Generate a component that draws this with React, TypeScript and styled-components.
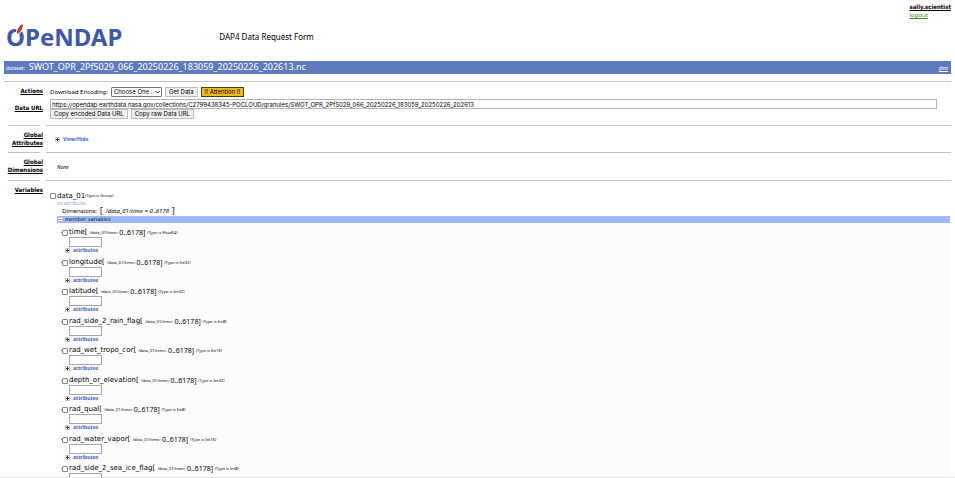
import React from "react";
import styled, { createGlobalStyle } from "styled-components";

const text = `"Noto Sans", Tahoma, sans-serif`;
const wide = `"DejaVu Sans", Verdana, sans-serif`;
const strong = `"DejaVu Sans Condensed", "DejaVu Sans", sans-serif`;
const control = `Inter, "Liberation Sans", sans-serif`;

const GlobalStyle = createGlobalStyle`
  *, *::before, *::after { box-sizing: border-box; }
  body {
    margin: 0;
    background: #fff;
    color: #000;
    font: 6px/8px ${text};
  }
`;

const Page = styled.main`
  height: 100vh;
  overflow: hidden;
  border-bottom: 1px solid #e6e6e6;
  padding: 3px 4px 0;
`;

const UserBox = styled.div`
  display: flex;
  flex-direction: column;
  width: max-content;
  margin-left: auto;
`;

const UserLink = styled.a`
  color: #000;
  font-family: ${strong};
  font-weight: bold;
`;

const LogoutLink = styled.a`
  color: #3c8a1e;
`;

const Header = styled.header`
  display: flex;
  align-items: center;
  gap: 97px;
  height: 35px;
`;

const Logo = styled.div`
  position: relative;
  padding-left: 2px;
  color: #3f57a6;
  font: bold 24px/28px "Noto Sans", sans-serif;
`;

const Quill = styled.svg`
  position: absolute;
  left: 12px;
  top: 0;
  width: 9px;
  height: 12px;
`;

const Title = styled.h1`
  margin: 0;
  font-size: 8px;
  font-weight: normal;
`;

const Banner = styled.div`
  display: flex;
  align-items: center;
  justify-content: space-between;
  height: 13px;
  margin-top: 7px;
  padding: 0 3px 0 2px;
  background: #5f7bbf;
  color: #fff;
`;

const Dataset = styled.div`
  display: flex;
  align-items: baseline;
  gap: 4px;
  font-size: 9px;
  line-height: 12px;
`;

const BannerLabel = styled.span`
  font-size: 5px;
`;

const DmrLink = styled.a`
  color: #fff;
  font-size: 5px;
  font-style: italic;
`;

const Rule = styled.hr`
  height: 1px;
  margin: 7px 0 0;
  border: 0;
  background: #c4c4c4;
`;

const Grid = styled.div`
  display: grid;
  grid-template-columns: 39px minmax(0, 1fr);
  column-gap: 7px;
`;

const SideRule = styled(Rule)`
  width: 32px;
  margin: 0 0 0 4px;
`;

const MainRule = styled(Rule)`
  margin: 0 0 0 -4px;
`;

const Label = styled.h2`
  display: flex;
  flex-direction: column;
  align-items: flex-end;
  margin: 0;
  padding-top: 5px;
  font: bold 6px/8px ${strong};
  text-decoration: underline;
`;

const Cell = styled.div<{ $h: number }>`
  height: ${(p) => p.$h}px;
`;

const Actions = styled(Cell)`
  display: flex;
  align-items: center;
  gap: 3px;
  padding-top: 3px;
`;

const SelectBox = styled.span`
  position: relative;
  display: flex;
  width: 51px;
`;

const Encoding = styled.select`
  appearance: none;
  width: 100%;
  height: 10px;
  padding: 0 4px 0 2px;
  border: 1px solid #767676;
  border-radius: 1px;
  background: #fff;
  color: #000;
  font: 6px/8px ${control};
`;

const Chevron = styled.svg`
  position: absolute;
  right: 2px;
  top: 3px;
  width: 5px;
  height: 4px;
  pointer-events: none;
`;

const Button = styled.button<{ $warn?: boolean }>`
  height: 10px;
  padding: 0 3px;
  border: 1px solid ${(p) => (p.$warn ? "#4a3d10" : "#bdbdbd")};
  background: ${(p) => (p.$warn ? "#efba28" : "#efefef")};
  color: #000;
  font: 6px/8px ${control};
`;

const UrlBlock = styled(Cell)`
  padding-right: 14px;
`;

const UrlInput = styled.input`
  display: block;
  width: 100%;
  height: 10px;
  padding: 0 1px;
  border: 1px solid #b4b4b4;
  color: #000;
  font: 6px/8px ${control};
`;

const ButtonRow = styled.div`
  display: flex;
  gap: 3px;
`;

const Expander = styled.button`
  display: flex;
  align-items: center;
  gap: 3px;
  padding: 0;
  border: 0;
  background: none;
  color: #3f63bd;
  font: bold 5px/7px ${text};
`;

const AttributesCell = styled(Cell)`
  padding: 10px 0 0 5px;
`;

const NoneCell = styled(Cell)`
  padding: 10px 0 0 7px;
  font-size: 5px;
  font-style: italic;
`;

const Group = styled.div`
  padding-top: 10px;
`;

const GroupHead = styled.label`
  display: flex;
  align-items: center;
  height: 10px;
  font: 7px/10px ${wide};
`;

const Check = styled.input`
  appearance: none;
  flex: none;
  width: 6px;
  height: 6px;
  margin: 0 1px 0 0;
  border: 1px solid #858585;
  border-radius: 1px;
  background: #fff;
`;

const Small = styled.span`
  font-family: ${text};
  font-size: 4px;
`;

const NoAttributes = styled.div`
  padding-left: 7px;
  color: #8fa8ee;
  font-size: 5px;
  line-height: 5px;
  font-style: italic;
`;

const Dimensions = styled.div`
  display: flex;
  align-items: center;
  gap: 3px;
  height: 10px;
  padding-left: 12px;
`;

const Bracket = styled.span`
  font-size: 8px;
`;

const Members = styled.section`
  margin: 0 1px 0 7px;
  background: #fcfcfc;
`;

const MembersBar = styled.button`
  display: flex;
  align-items: center;
  gap: 2px;
  width: 100%;
  height: 7px;
  padding: 0 1px;
  border: 0;
  background: #9db8fb;
  color: #111;
  font: 5px/7px ${wide};
`;

const VariableList = styled.ul`
  margin: 0;
  padding: 5px 0 0 4px;
  list-style: none;
`;

const Variable = styled.li`
  height: 30px;
  &:nth-child(even) { height: 29px; }
`;

const VariableHead = styled.label`
  display: flex;
  align-items: center;
  height: 9px;
  white-space: pre;
  font: 7px/9px ${wide};
  &::before {
    content: "";
    width: 1px;
    height: 1px;
    background: #888;
  }
`;

const Range = styled.span`
  font-family: ${text};
`;

const Subset = styled.input`
  display: block;
  width: 33px;
  height: 10px;
  margin-left: 8px;
  padding: 0 1px;
  border: 1px solid #a8a8a8;
  background: #fff;
  font: 6px/8px ${control};
`;

const VariableAttributes = styled(Expander)`
  margin-left: 4px;
`;

const Toggle = ({ open }: { open?: boolean }) => (
  <svg width="5" height="5" viewBox="0 0 5 5" aria-hidden="true">
    <rect x=".5" y=".5" width="4" height="4" fill="#fff" stroke="#c8c8c8" />
    <path d={open ? "M1.5 2.5h2" : "M1 2.5h3M2.5 1v3"} stroke={open ? "#777" : "#333"} />
  </svg>
);

const variables = [
  ["time", "Float64"],
  ["longitude", "Int32"],
  ["latitude", "Int32"],
  ["rad_side_2_rain_flag", "Int8"],
  ["rad_wet_tropo_cor", "Int16"],
  ["depth_or_elevation", "Int32"],
  ["rad_qual", "Int8"],
  ["rad_water_vapor", "Int16"],
  ["rad_side_2_sea_ice_flag", "Int8"],
];

const url =
  "https://opendap.earthdata.nasa.gov/collections/C2799438345-POCLOUD/granules/SWOT_OPR_2PfS029_066_20250226_183059_20250226_202613";

export default function App() {
  return (
    <>
      <GlobalStyle />
      <Page>
        <UserBox>
          <UserLink href="#profile">sally.scientist</UserLink>
          <LogoutLink href="#logout">logout</LogoutLink>
        </UserBox>
        <Header>
          <Logo>
            OPeNDAP
            <Quill viewBox="0 0 9 12" aria-hidden="true">
              <path
                d="M1 11C0.5 7 3 3 6.5 1C7.5 5 5 9 1 11Z"
                fill="#c0392f"
                stroke="#fff"
                strokeWidth="2"
                paintOrder="stroke"
              />
            </Quill>
          </Logo>
          <Title>DAP4 Data Request Form</Title>
        </Header>
        <Banner>
          <Dataset>
            <BannerLabel>dataset:</BannerLabel>
            SWOT_OPR_2PfS029_066_20250226_183059_20250226_202613.nc
          </Dataset>
          <DmrLink href="#dmr">dmr</DmrLink>
        </Banner>
        <Rule />
        <Grid>
          <Label>Actions</Label>
          <Actions $h={17}>
            <label htmlFor="encoding">Download Encoding:</label>
            <SelectBox>
              <Encoding id="encoding">
                <option>Choose One...</option>
              </Encoding>
              <Chevron viewBox="0 0 5 4" aria-hidden="true">
                <path d="M.5 1 2.5 3 4.5 1" fill="none" stroke="#222" />
              </Chevron>
            </SelectBox>
            <Button>Get Data</Button>
            <Button $warn>!! Attention !!</Button>
          </Actions>
          <Label>
            <label htmlFor="data-url">Data URL</label>
          </Label>
          <UrlBlock $h={26}>
            <UrlInput id="data-url" defaultValue={url} />
            <ButtonRow>
              <Button>Copy encoded Data URL</Button>
              <Button>Copy raw Data URL</Button>
            </ButtonRow>
          </UrlBlock>
          <SideRule />
          <MainRule />
          <Label>
            <span>Global</span>
            <span>Attributes</span>
          </Label>
          <AttributesCell $h={26}>
            <Expander>
              <Toggle />
              View/Hide
            </Expander>
          </AttributesCell>
          <SideRule />
          <MainRule />
          <Label>
            <span>Global</span>
            <span>Dimensions</span>
          </Label>
          <NoneCell $h={27}>None</NoneCell>
          <SideRule />
          <MainRule />
          <Label>Variables</Label>
          <Group>
            <GroupHead>
              <Check type="checkbox" />
              data_01<Small>(Type is Group)</Small>
            </GroupHead>
            <NoAttributes>no attributes</NoAttributes>
            <Dimensions>
              Dimensions: <Bracket>[</Bracket>
              <em>/data_01/time = 0..6178</em>
              <Bracket>]</Bracket>
            </Dimensions>
            <Members>
              <MembersBar>
                <Toggle open />
                member variables
              </MembersBar>
              <VariableList>
                {variables.map(([name, type]) => (
                  <Variable key={name}>
                    <VariableHead>
                      <Check type="checkbox" />
                      {name}[ <Small>/data_01/time= </Small>
                      <Range>0..6178] </Range>
                      <Small>(Type is {type})</Small>
                    </VariableHead>
                    <Subset aria-label={`${name} subset`} />
                    <VariableAttributes>
                      <Toggle />
                      attributes
                    </VariableAttributes>
                  </Variable>
                ))}
              </VariableList>
            </Members>
          </Group>
        </Grid>
      </Page>
    </>
  );
}
